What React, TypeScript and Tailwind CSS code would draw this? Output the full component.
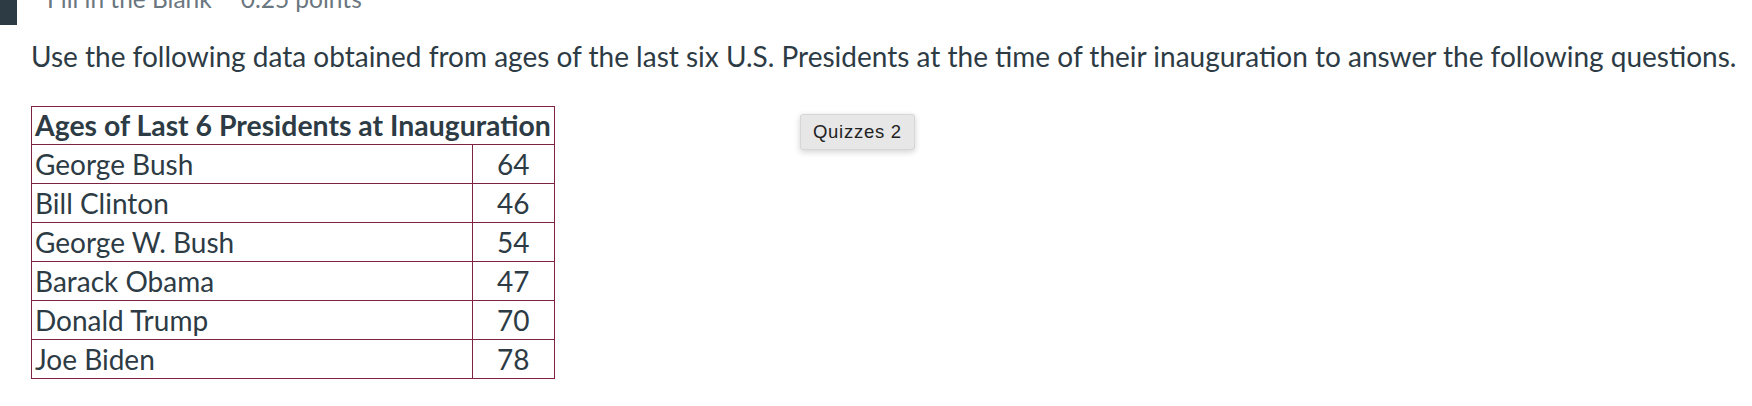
const rows: [string, number][] = [
  ["George Bush", 64],
  ["Bill Clinton", 46],
  ["George W. Bush", 54],
  ["Barack Obama", 47],
  ["Donald Trump", 70],
  ["Joe Biden", 78],
];

export default function App() {
  return (
    <div className="h-[406px] w-[1752px] overflow-hidden bg-white font-['Lato',sans-serif] text-[#2d3b45]">
      {/* question header, scrolled mostly out of view */}
      <div className="flex h-[25px] items-start">
        <div className="h-[25px] w-[17px] bg-[#2d3b45]" />
        <div className="-mt-[13px] ml-[30px] flex gap-[29px] text-[24.5px] leading-[24.5px] text-[#6b7780]">
          <span>Fill in the Blank</span>
          <span>0.25 points</span>
        </div>
      </div>

      <p className="ml-[31px] mt-[14px] text-[28px] leading-[34px]">
        Use the following data obtained from ages of the last six U.S. Presidents at the time of their inauguration to
        answer the following questions.
      </p>

      <div className="ml-[31px] mt-[33px] flex items-start">
        <table className="border-collapse border border-[#7e2340] text-[28px] leading-[38px]">
          <thead>
            <tr>
              <th
                colSpan={2}
                className="border border-[#7e2340] px-[3px] text-left text-[28.4px] font-bold leading-[37px]"
              >
                Ages of Last 6 Presidents at Inauguration
              </th>
            </tr>
          </thead>
          <tbody>
            {rows.map(([name, age]) => (
              <tr key={name}>
                <td className="border border-[#7e2340] px-[3px]">{name}</td>
                <td className="w-[82px] border border-[#7e2340] text-center">{age}</td>
              </tr>
            ))}
          </tbody>
        </table>

        <button className="ml-[245px] mt-[8px] h-[36px] w-[115px] rounded-[3px] border border-[#d6d6d6] bg-[#e7e7e7] font-['Liberation_Sans',sans-serif] text-[18.5px] tracking-[0.04em] text-[#222] shadow-[0_2px_6px_rgba(0,0,0,0.18)]">
          Quizzes 2
        </button>
      </div>
    </div>
  );
}
